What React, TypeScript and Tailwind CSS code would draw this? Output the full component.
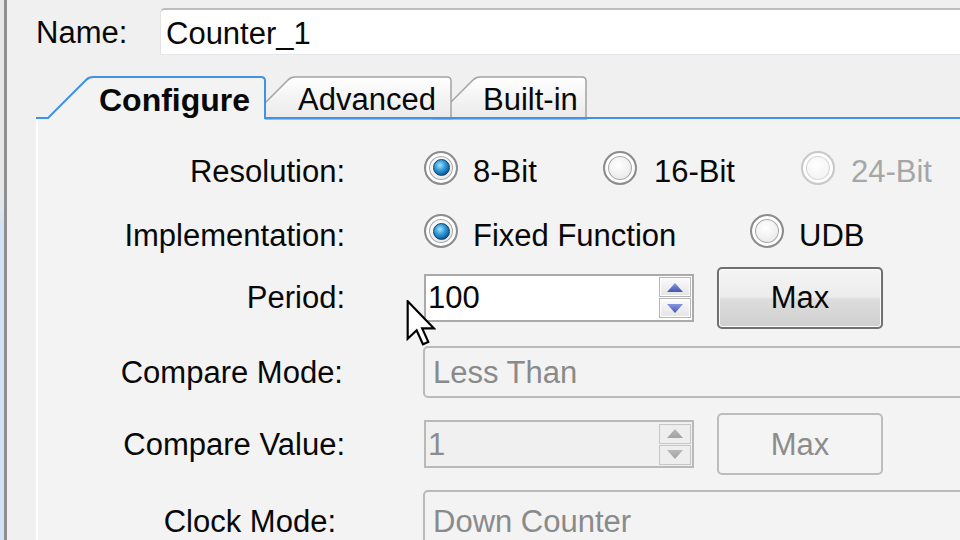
import React from "react";

function Radio({ checked = false, disabled = false }: { checked?: boolean; disabled?: boolean }) {
  return (
    <span
      className={
        "mb-[8px] flex h-[34px] w-[34px] shrink-0 items-center justify-center rounded-full border-2 " +
        (disabled
          ? "border-[#c9c9c9] bg-[radial-gradient(circle_at_45%_40%,#ffffff_0%,#f4f4f4_55%,#e6e6e6_100%)] shadow-[inset_0_0_0_3px_#ffffff,inset_0_0_0_4px_#d6d6d6]"
          : "border-[#8c8c8c] bg-[radial-gradient(circle_at_45%_40%,#ffffff_0%,#ececec_55%,#d2d2d2_100%)] shadow-[inset_0_0_0_3px_#ffffff,inset_0_0_0_4px_#a9a9a9]")
      }
    >
      {checked && (
        <span className="h-[17px] w-[17px] rounded-full border border-[#123f66] bg-[radial-gradient(circle_at_40%_35%,#a8e2ff_0%,#3ba3e0_35%,#0d5a96_75%,#0a3d68_100%)]" />
      )}
    </span>
  );
}

function Arrow({ up, disabled }: { up?: boolean; disabled?: boolean }) {
  const c1 = disabled ? "#b9b9b9" : "#8496e0";
  const c2 = disabled ? "#a2a2a2" : "#4457b0";
  const id = (up ? "u" : "d") + (disabled ? "x" : "e");
  return (
    <svg width="16" height="9" viewBox="0 0 16 9">
      <defs>
        <linearGradient id={id} x1="0" y1="0" x2="0" y2="1">
          <stop offset="0" stopColor={c1} />
          <stop offset="1" stopColor={c2} />
        </linearGradient>
      </defs>
      {up ? <path d="M8 0 L16 9 L0 9 Z" fill={`url(#${id})`} /> : <path d="M0 0 L16 0 L8 9 Z" fill={`url(#${id})`} />}
    </svg>
  );
}

function SpinBtn({ up, disabled }: { up?: boolean; disabled?: boolean }) {
  return (
    <div
      className={
        "flex h-[20px] w-[32px] items-center justify-center border " +
        (disabled
          ? "border-[#c6c6c6] bg-[#eeeeee]"
          : "border-[#b4b4b4] bg-[linear-gradient(to_bottom,#fbfbfb,#e4e4e4)] shadow-[inset_0_0_0_1px_#ffffff]")
      }
    >
      <Arrow up={up} disabled={disabled} />
    </div>
  );
}

function SpinBox({ value, disabled }: { value: string; disabled?: boolean }) {
  return (
    <div
      className={
        "flex h-[48px] w-[270px] shrink-0 items-center border-2 pl-[2px] pr-[1px] " +
        (disabled ? "border-[#b9b9b9] bg-[#f0f0f0] text-[#8c8c8c]" : "border-[#aaaaaa] bg-white")
      }
    >
      <span className="flex-1 leading-none">{value}</span>
      <div className="flex flex-col gap-[1px]">
        <SpinBtn up disabled={disabled} />
        <SpinBtn disabled={disabled} />
      </div>
    </div>
  );
}

function MaxButton({ disabled }: { disabled?: boolean }) {
  return (
    <div
      className={
        "ml-[23px] flex h-[62px] w-[166px] shrink-0 items-center justify-center rounded-[5px] border-2 leading-none " +
        (disabled
          ? "border-[#bdbdbd] bg-[#f4f4f4] text-[#8c8c8c]"
          : "border-[#707070] bg-[linear-gradient(to_bottom,#f4f4f4_0%,#ececec_48%,#dddddd_52%,#cfcfcf_100%)] shadow-[inset_0_0_0_1px_#fbfbfb]")
      }
    >
      Max
    </div>
  );
}

function Combo({ text, h }: { text: string; h: string }) {
  return (
    <div
      className={
        "flex w-[580px] shrink-0 items-center rounded-[5px] border-2 border-[#b9b9b9] bg-[#f3f3f3] pl-[8px] leading-none text-[#8a8a8a] " +
        h
      }
    >
      {text}
    </div>
  );
}

function Label({ children, extra = "" }: { children: React.ReactNode; extra?: string }) {
  return <div className={"w-[307px] shrink-0 text-right leading-none " + extra}>{children}</div>;
}

export default function App() {
  return (
    <div className="relative flex h-[540px] w-[960px] overflow-hidden bg-[#f0f0f0] font-['Liberation_Sans',Arial,sans-serif] text-[31px] text-[#080808]">
      <div className="h-full w-[4px] shrink-0 bg-[linear-gradient(to_bottom,#e6e6e6_0%,#e6e6e6_36%,#d2e2f2_42%,#d2e2f2_100%)]" />
      <div className="h-full w-[3px] shrink-0 bg-[#8f8f8f]" />
      <div className="flex min-w-0 flex-1 flex-col pl-[29px]">
        {/* Name row */}
        <div className="mt-[8px] flex h-[47px] shrink-0 items-center">
          <span className="w-[124px] shrink-0 pt-[2px] leading-none">Name:</span>
          <div className="flex h-[47px] w-[820px] shrink-0 items-center rounded-tl-[5px] border-l border-t-2 border-b border-l-[#e2e2e2] border-t-[#bdbdbd] border-b-[#e3e6ea] bg-white pl-[5px] pt-[2px] leading-none">
            Counter_1
          </div>
        </div>

        {/* Tab strip */}
        <div className="relative mt-[20px] flex h-[45px] shrink-0 items-center">
          <svg className="absolute left-0 top-0" width="924" height="45" viewBox="0 0 924 45">
            <defs>
              <linearGradient id="tabg" x1="0" y1="0" x2="0" y2="1">
                <stop offset="0" stopColor="#ffffff" />
                <stop offset="1" stopColor="#e9e9e9" />
              </linearGradient>
            </defs>
            <path d="M398 44 L437 5 Q440 2 444 2 L546 2 Q550 2 550 6 L550 44 Z" fill="url(#tabg)" stroke="#a3a3a3" strokeWidth="1.5" />
            <path d="M213 44 L252 5 Q255 2 259 2 L411 2 Q415 2 415 6 L415 44 Z" fill="url(#tabg)" stroke="#a3a3a3" strokeWidth="1.5" />
            <path d="M12 43 L50 5 Q53 2 57 2 L225 2 Q229 2 229 6 L229 45 L12 45 Z" fill="#f3f3f3" />
            <path d="M0 43 L12 43 L50 5 Q53 2 57 2 L225 2 Q229 2 229 6 L229 43 L924 43" fill="none" stroke="#3f92e4" strokeWidth="2" />
          </svg>
          <div className="relative flex h-full items-center pt-[4px]">
            <div className="w-[229px] pl-[63px] text-[32px] font-bold leading-none">Configure</div>
            <div className="w-[186px] pl-[33px] leading-none">Advanced</div>
            <div className="w-[135px] pl-[32px] leading-none">Built-in</div>
          </div>
        </div>

        {/* Panel */}
        <div className="flex min-h-0 flex-1 flex-col border-l-2 border-white bg-[#f3f3f3] pt-[20px]">
          <div className="flex h-[63px] shrink-0 items-center">
            <Label>Resolution:</Label>
            <div className="ml-[79px] flex items-center">
              <div className="flex w-[179px] items-center gap-[15px]">
                <Radio checked />
                <span className="leading-none">8-Bit</span>
              </div>
              <div className="flex w-[198px] items-center gap-[17px]">
                <Radio />
                <span className="leading-none">16-Bit</span>
              </div>
              <div className="flex items-center gap-[16px]">
                <Radio disabled />
                <span className="leading-none text-[#a6a6a6]">24-Bit</span>
              </div>
            </div>
          </div>

          <div className="flex h-[64px] shrink-0 items-center">
            <Label>Implementation:</Label>
            <div className="ml-[79px] flex items-center">
              <div className="flex w-[326px] items-center gap-[15px]">
                <Radio checked />
                <span className="leading-none">Fixed Function</span>
              </div>
              <div className="flex items-center gap-[15px]">
                <Radio />
                <span className="leading-none">UDB</span>
              </div>
            </div>
          </div>

          <div className="flex h-[61px] shrink-0 items-center">
            <Label>Period:</Label>
            <div className="ml-[79px] flex items-center">
              <SpinBox value="100" />
              <MaxButton />
            </div>
          </div>

          <div className="flex h-[88px] shrink-0 items-center">
            <Label extra="pr-[2px]">Compare Mode:</Label>
            <div className="ml-[78px] flex items-center">
              <Combo text="Less Than" h="h-[52px]" />
            </div>
          </div>

          <div className="flex h-[56px] shrink-0 items-center">
            <Label>Compare Value:</Label>
            <div className="ml-[79px] flex items-center">
              <SpinBox value="1" disabled />
              <MaxButton disabled />
            </div>
          </div>

          <div className="flex h-[98px] shrink-0 items-center">
            <Label extra="pr-[9px]">Clock Mode:</Label>
            <div className="ml-[78px] flex items-center">
              <Combo text="Down Counter" h="h-[62px]" />
            </div>
          </div>
        </div>
      </div>

      {/* Mouse cursor */}
      <svg className="absolute left-[406px] top-[300px]" width="30" height="46" viewBox="0 0 12 19">
        <path
          d="M0.5 0.5 L0.5 16 L4.2 12.5 L6.8 18.3 L9 17.3 L6.5 11.7 L11.3 11.7 Z"
          fill="#ffffff"
          stroke="#000000"
          strokeWidth="0.9"
          strokeLinejoin="miter"
        />
      </svg>
    </div>
  );
}
